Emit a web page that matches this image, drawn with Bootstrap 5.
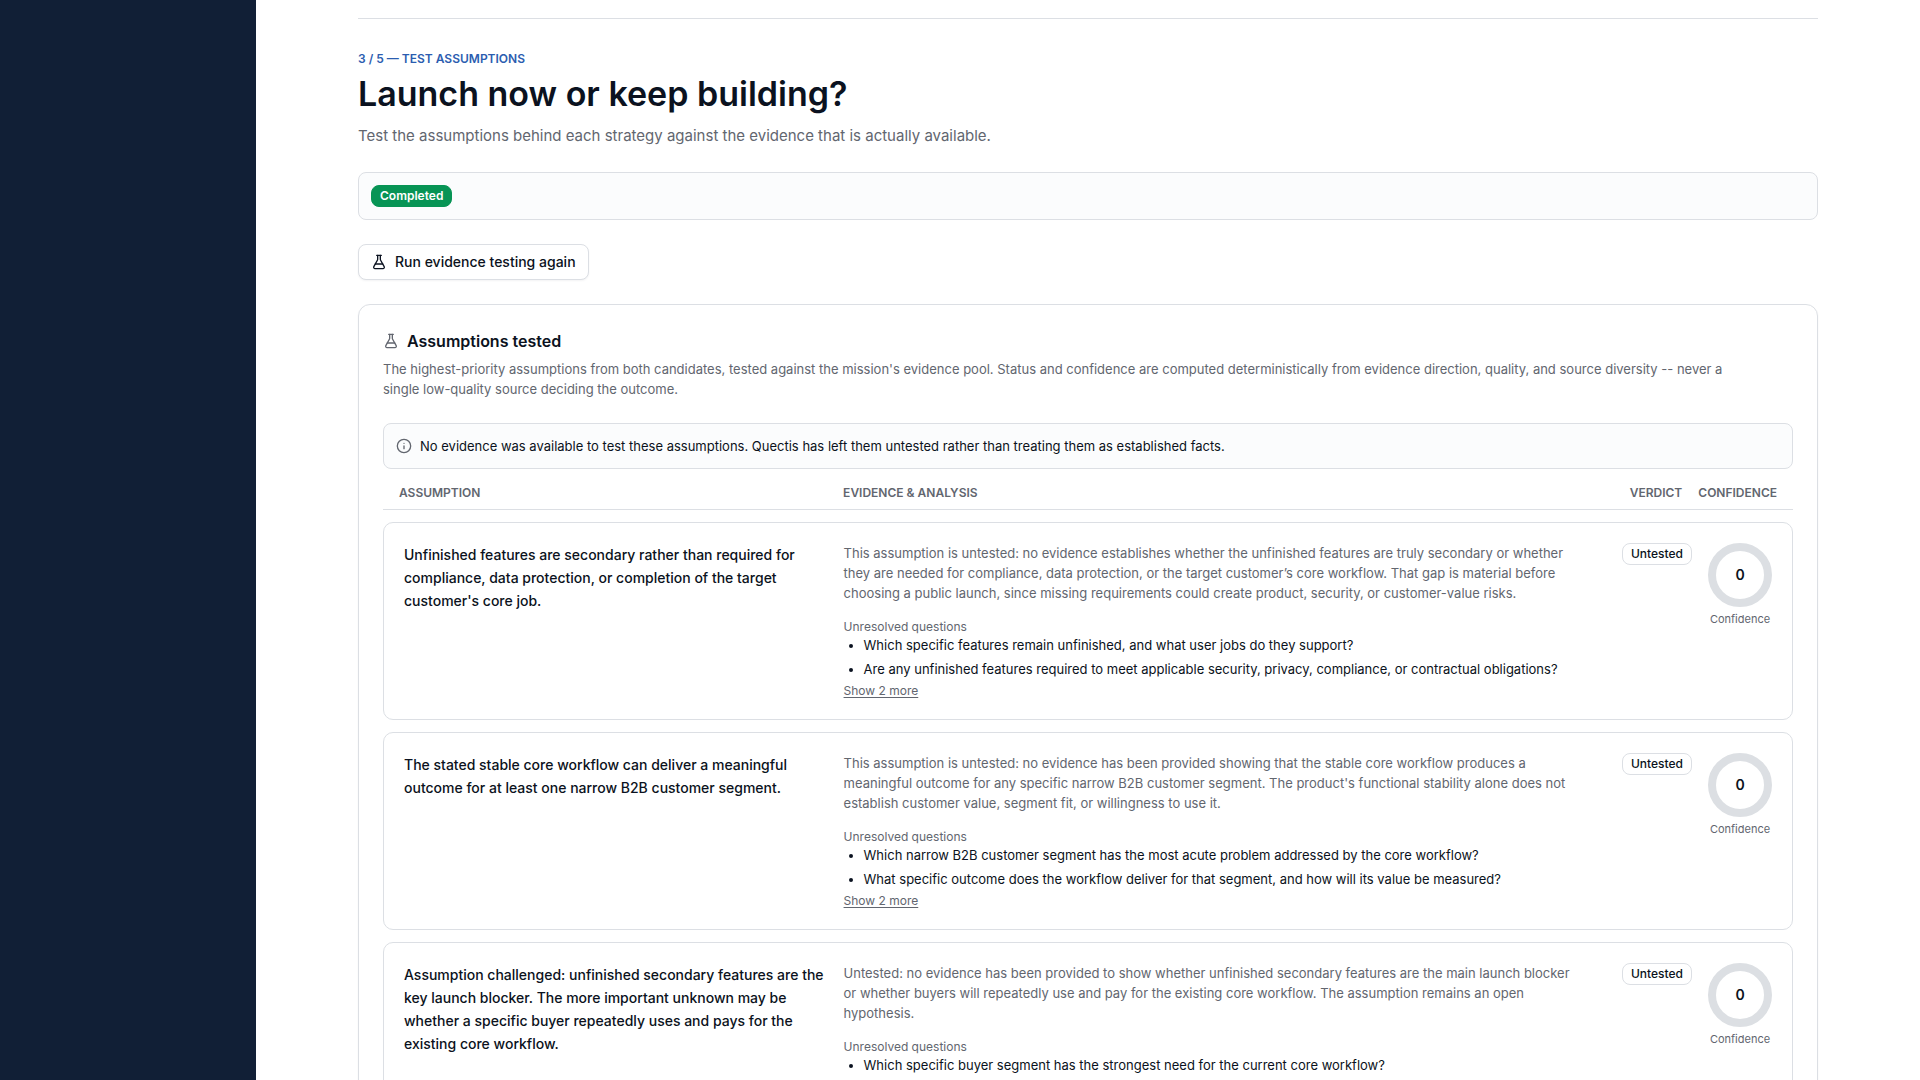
<!DOCTYPE html>
<html lang="en">
<head>
<meta charset="utf-8">
<meta name="viewport" content="width=device-width, initial-scale=1">
<title>Launch now or keep building?</title>
<link href="https://cdn.jsdelivr.net/npm/bootstrap@5.3.0/dist/css/bootstrap.min.css" rel="stylesheet">
<style>
  :root {
    --ink: #0b1220;
    --soft: #62666f;
    --line: #dcdfe4;
    --tint: #fbfcfd;
  }
  body { font-family: Inter, "Liberation Sans", sans-serif; font-size: 13px; line-height: 20px; color: var(--ink); background: #fff; }
  .side-panel { width: 256px; background: #111f36; }
  .page-column { max-width: 1460px; padding-top: 18px; }
  .top-rule { border-top: 1px solid var(--line); }
  .page-head { padding-top: 32px; }
  .eyebrow { font-size: 12px; line-height: 16px; font-weight: 600; color: #2b5db0; }
  .page-title { font-size: 34px; line-height: 44px; font-weight: 600; margin: 5px 0 8px; }
  .page-sub { font-size: 15px; line-height: 24px; }
  .soft-text { color: var(--soft); }
  .tint-box { background: var(--tint); border: 1px solid var(--line); border-radius: 8px; padding: 12px; }
  .pill { display: inline-block; font-size: 12px; line-height: 16px; font-weight: 500; padding: 2px 8px; border: 1px solid var(--line); border-radius: 8px; }
  .pill-done { background: #079455; border-color: #079455; color: #fff; font-weight: 600; }
  .btn-rerun { font-size: 14px; line-height: 20px; font-weight: 500; color: var(--ink); background: #fff; border: 1px solid var(--line); border-radius: 8px; padding: 7px 12px; box-shadow: 0 1px 2px rgba(16, 24, 40, .05); }
  .panel { border: 1px solid var(--line); border-radius: 12px; padding: 24px; box-shadow: 0 1px 2px rgba(16, 24, 40, .05); }
  .panel-title { font-size: 16px; line-height: 24px; font-weight: 600; margin-bottom: 6px; }
  .tests tr { display: grid; grid-template-columns: minmax(0, 1fr) minmax(0, 1.8fr) auto auto; column-gap: 16px; }
  .tests th, .tests td { padding: 0; text-align: left; }
  .tests thead tr { padding: 8px 16px; border-bottom: 1px solid var(--line); }
  .tests thead th { font-size: 12px; line-height: 16px; font-weight: 600; color: var(--soft); }
  .tests tbody tr { padding: 20px; border: 1px solid var(--line); border-radius: 10px; margin-top: 12px; }
  .claim { font-size: 14px; font-weight: 500; line-height: 23px; }
  .caption-text { font-size: 12px; line-height: 16px; color: var(--soft); }
  .ring-label { font-size: 11px; }
  .questions { padding-left: 20px; }
  .more { font-size: 12px; line-height: 16px; color: var(--soft); text-underline-offset: 2px; }
  .ring { width: 64px; height: 64px; border: 8px solid #dcdfe3; border-radius: 50%; font-size: 14px; font-weight: 600; }
</style>
</head>
<body>
<div class="d-flex min-vh-100">
  <aside class="side-panel flex-shrink-0"></aside>
  <main class="flex-grow-1 px-4">
    <div class="page-column mx-auto">
      <div class="top-rule"></div>

      <header class="page-head">
        <p class="eyebrow mb-0">3 / 5 — TEST ASSUMPTIONS</p>
        <h1 class="page-title">Launch now or keep building?</h1>
        <p class="page-sub soft-text mb-4">Test the assumptions behind each strategy against the evidence that is actually available.</p>
      </header>

      <div class="tint-box d-flex mb-4"><span class="pill pill-done">Completed</span></div>

      <button type="button" class="btn btn-rerun d-inline-flex align-items-center gap-2 mb-4">
        <svg width="16" height="16" viewBox="0 0 24 24" fill="none" stroke="currentColor" stroke-width="2" stroke-linecap="round" stroke-linejoin="round" aria-hidden="true"><path d="M14 2v6a2 2 0 0 0 .245.96l5.51 10.08A2 2 0 0 1 18 22H6a2 2 0 0 1-1.755-2.96l5.51-10.08A2 2 0 0 0 10 8V2"/><path d="M6.453 15h11.094"/><path d="M8.500 2h7"/></svg>
        Run evidence testing again
      </button>

      <section class="panel">
        <h2 class="panel-title d-flex align-items-center gap-2">
          <svg class="soft-text" width="16" height="16" viewBox="0 0 24 24" fill="none" stroke="currentColor" stroke-width="2" stroke-linecap="round" stroke-linejoin="round" aria-hidden="true"><path d="M14 2v6a2 2 0 0 0 .245.96l5.51 10.08A2 2 0 0 1 18 22H6a2 2 0 0 1-1.755-2.96l5.51-10.08A2 2 0 0 0 10 8V2"/><path d="M6.453 15h11.094"/><path d="M8.500 2h7"/></svg>
          Assumptions tested
        </h2>
        <p class="soft-text mb-4">The highest-priority assumptions from both candidates, tested against the mission's evidence pool. Status and confidence are computed deterministically from evidence direction, quality, and source diversity -- never a<br> single low-quality source deciding the outcome.</p>

        <div class="tint-box d-flex align-items-center gap-2 mb-2" role="status">
          <svg class="soft-text flex-shrink-0" width="16" height="16" viewBox="0 0 24 24" fill="none" stroke="currentColor" stroke-width="2" stroke-linecap="round" stroke-linejoin="round" aria-hidden="true"><circle cx="12" cy="12" r="10"/><path d="M12 16v-4"/><path d="M12 8h.01"/></svg>
          <span>No evidence was available to test these assumptions. Quectis has left them untested rather than treating them as established facts.</span>
        </div>

        <table class="tests d-block">
          <thead class="d-block">
            <tr><th scope="col">ASSUMPTION</th><th scope="col">EVIDENCE &amp; ANALYSIS</th><th scope="col">VERDICT</th><th scope="col">CONFIDENCE</th></tr>
          </thead>
          <tbody class="d-block">
            <tr>
              <td class="claim">Unfinished features are secondary rather than required for compliance, data protection, or completion of the target customer's core job.</td>
              <td>
                <p class="soft-text mb-3">This assumption is untested: no evidence establishes whether the unfinished features are truly secondary or whether<br> they are needed for compliance, data protection, or the target customer’s core workflow. That gap is material before<br> choosing a public launch, since missing requirements could create product, security, or customer-value risks.</p>
                <div class="caption-text">Unresolved questions</div>
                <ul class="questions d-grid gap-1 mb-1"><li>Which specific features remain unfinished, and what user jobs do they support?</li><li>Are any unfinished features required to meet applicable security, privacy, compliance, or contractual obligations?</li></ul>
                <button type="button" class="btn btn-link more d-block border-0 p-0">Show 2 more</button>
              </td>
              <td><span class="pill">Untested</span></td>
              <td><div class="ring d-flex align-items-center justify-content-center">0</div><div class="caption-text ring-label text-center mt-1">Confidence</div></td>
            </tr>
            <tr>
              <td class="claim">The stated stable core workflow can deliver a meaningful outcome for at least one narrow B2B customer segment.</td>
              <td>
                <p class="soft-text mb-3">This assumption is untested: no evidence has been provided showing that the stable core workflow produces a<br> meaningful outcome for any specific narrow B2B customer segment. The product's functional stability alone does not<br> establish customer value, segment fit, or willingness to use it.</p>
                <div class="caption-text">Unresolved questions</div>
                <ul class="questions d-grid gap-1 mb-1"><li>Which narrow B2B customer segment has the most acute problem addressed by the core workflow?</li><li>What specific outcome does the workflow deliver for that segment, and how will its value be measured?</li></ul>
                <button type="button" class="btn btn-link more d-block border-0 p-0">Show 2 more</button>
              </td>
              <td><span class="pill">Untested</span></td>
              <td><div class="ring d-flex align-items-center justify-content-center">0</div><div class="caption-text ring-label text-center mt-1">Confidence</div></td>
            </tr>
            <tr>
              <td class="claim">Assumption challenged: unfinished secondary features are the key launch blocker. The more important unknown may be whether a specific buyer repeatedly uses and pays for the existing core workflow.</td>
              <td>
                <p class="soft-text mb-3">Untested: no evidence has been provided to show whether unfinished secondary features are the main launch blocker<br> or whether buyers will repeatedly use and pay for the existing core workflow. The assumption remains an open<br> hypothesis.</p>
                <div class="caption-text">Unresolved questions</div>
                <ul class="questions d-grid gap-1 mb-1"><li>Which specific buyer segment has the strongest need for the current core workflow?</li></ul>
              </td>
              <td><span class="pill">Untested</span></td>
              <td><div class="ring d-flex align-items-center justify-content-center">0</div><div class="caption-text ring-label text-center mt-1">Confidence</div></td>
            </tr>
          </tbody>
        </table>
      </section>
    </div>
  </main>
</div>
<script src="https://cdn.jsdelivr.net/npm/bootstrap@5.3.0/dist/js/bootstrap.bundle.min.js"></script>
</body>
</html>
